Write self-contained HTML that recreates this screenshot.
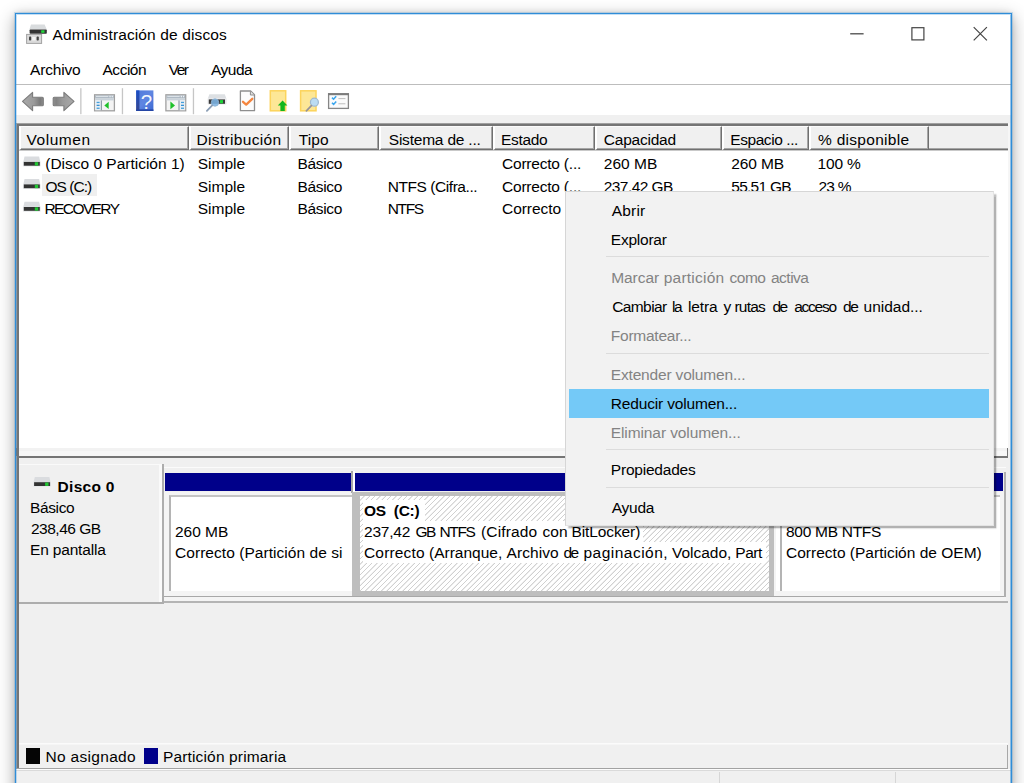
<!DOCTYPE html>
<html lang="es"><head><meta charset="utf-8"><title>Administración de discos</title>
<style>
html,body{margin:0;padding:0}
body{width:1024px;height:783px;overflow:hidden;background:#fff;position:relative;font-family:"Liberation Sans",sans-serif;color:#000}
.a{position:absolute}
.t{position:absolute;white-space:pre;line-height:20px;z-index:10}
.m{z-index:30}
#win{left:15px;top:13px;width:995px;height:800px;border:1px solid #2f8dd8;background:#f0f0f0;box-shadow:0 0 0 1px rgba(47,141,216,.22),0 5px 16px 1px rgba(0,0,0,.30),0 0 6px rgba(0,0,0,.12)}
.hc{position:absolute;top:126px;height:22px;background:#f0f0f0;border-top:1px solid #fbfbfb;border-left:2px solid #fff;border-right:1px solid #707070;border-bottom:1px solid #707070;box-sizing:content-box}
.hc:after{content:"";position:absolute;right:0;top:0;bottom:0;width:1px;background:#a6a6a6}
.hc:before{content:"";position:absolute;left:0;right:0;bottom:0;height:1px;background:#a6a6a6}
.sep{position:absolute;height:1px;background:#dcdcdc;left:606px;width:383px;z-index:25}
</style></head><body>
<div id="win" class="a"></div>
<!-- title + menu + toolbar white -->
<div class="a" style="left:16px;top:14px;width:995px;height:70px;background:#fff"></div>
<div class="a" style="left:16px;top:84px;width:995px;height:1px;background:#bdbdbd"></div>
<div class="a" style="left:16px;top:85px;width:995px;height:30px;background:#fff"></div>
<!-- caption buttons -->
<svg class="a" style="left:840px;top:20px" width="160" height="30" viewBox="0 0 160 30">
 <path d="M10.2 13.8H23.6" stroke="#4a4a4a" stroke-width="1.3" fill="none"/>
 <rect x="71.9" y="7.7" width="12" height="12.2" stroke="#444" stroke-width="1.2" fill="none"/>
 <path d="M133.7 7.2L146.9 20.4M146.9 7.2L133.7 20.4" stroke="#444" stroke-width="1.2" fill="none"/>
</svg>
<svg class="a" style="left:0;top:0;z-index:5" width="1024" height="783" viewBox="0 0 1024 783">
<defs>
 <linearGradient id="ga" x1="0" y1="0" x2="0" y2="1"><stop offset="0" stop-color="#b4b4b4"/><stop offset=".5" stop-color="#8e8e8e"/><stop offset="1" stop-color="#a8a8a8"/></linearGradient>
 <linearGradient id="gb" x1="0" y1="0" x2="1" y2="0"><stop offset="0" stop-color="#aaa"/><stop offset=".55" stop-color="#9a9a9a"/><stop offset=".85" stop-color="#7a7a7a"/><stop offset="1" stop-color="#8e8e8e"/></linearGradient>
 <linearGradient id="gf" x1="1" y1="0" x2="0" y2="0"><stop offset="0" stop-color="#aaa"/><stop offset=".55" stop-color="#9a9a9a"/><stop offset=".85" stop-color="#838383"/><stop offset="1" stop-color="#8e8e8e"/></linearGradient>
 <linearGradient id="gs" x1="0" y1="0" x2="0" y2="1"><stop offset="0" stop-color="#1a4fc6"/><stop offset="1" stop-color="#36468e"/></linearGradient>
 <linearGradient id="gh" x1="0" y1="0" x2="1" y2="1"><stop offset="0" stop-color="#5079da"/><stop offset=".5" stop-color="#5f86e2"/><stop offset="1" stop-color="#3c68d2"/></linearGradient>
 
</defs>
<!-- title icon -->
<g>
 <path d="M31 24.4H44.6L46.8 29.6H29.4Z" fill="#d9dcde"/>
 <rect x="29.6" y="29.4" width="17.2" height="4.4" rx=".8" fill="#333"/>
 <rect x="41.2" y="30.3" width="3.3" height="2.5" fill="#22d63c"/>
 <rect x="26.6" y="34.4" width="15" height="9" fill="#dadada" stroke="#a2a2a2" stroke-width="1"/>
 <rect x="29" y="36.6" width="2.2" height="4" rx=".8" fill="#444"/>
 <rect x="36.6" y="36.6" width="2.2" height="4" rx=".8" fill="#444"/>
 <rect x="32.2" y="37" width="3.4" height="3.4" fill="#f4f4f4"/>
</g>
<!-- back / forward arrows -->
<path d="M22.5 101.4L32.6 92.3V97.3H42.3Q43.3 97.3 43.3 98.3V104.7Q43.3 105.7 42.3 105.7H32.6V110.7Z" fill="url(#gb)" stroke="#7c7c7c" stroke-width="1.1" stroke-linejoin="round"/>
<path d="M74 101.4L63.9 92.3V97.3H54.2Q53.2 97.3 53.2 98.3V104.7Q53.2 105.7 54.2 105.7H63.9V110.7Z" fill="url(#gf)" stroke="#7c7c7c" stroke-width="1.1" stroke-linejoin="round"/>
<rect x="80.2" y="88.2" width="1.3" height="26" fill="#c6c6c6"/>
<rect x="121.8" y="88.2" width="1.3" height="26" fill="#c6c6c6"/>
<rect x="192.8" y="88.2" width="1.3" height="26" fill="#c6c6c6"/>
<!-- console tree icon -->
<g>
 <rect x="94.6" y="94.8" width="19.8" height="16" fill="#f4f4f4" stroke="#a0a0a0" stroke-width="1.3"/>
 <rect x="95.2" y="95.4" width="18.6" height="3" fill="#a9b5c0"/>
 <rect x="96" y="96.2" width="12.4" height=".9" fill="#e8edf1"/>
 <rect x="109.4" y="95.8" width="1.3" height="1.5" fill="#eef2f5"/><rect x="111.6" y="95.8" width="1.3" height="1.5" fill="#eef2f5"/>
 <rect x="95.2" y="98.4" width="18.6" height="2" fill="#c9d2da"/>
 <rect x="95.2" y="100.4" width="5.6" height="9.8" fill="#e9eff4"/>
 <rect x="100.8" y="100.4" width="1.2" height="9.8" fill="#8f9caa"/>
 <rect x="96.6" y="101.8" width="3" height="1.3" fill="#45a0dc"/>
 <rect x="96.6" y="104.7" width="3" height="1.3" fill="#3592d6"/>
 <rect x="96.6" y="107.6" width="3" height="1.3" fill="#45a0dc"/>
 <path d="M104.3 105.4L108.7 101.8V109Z" fill="#1fc12b"/>
</g>
<!-- help icon -->
<g>
 <rect x="136.2" y="90.4" width="17.2" height="20.6" fill="url(#gh)"/>
 <rect x="136.2" y="90.4" width="3.2" height="20.6" fill="url(#gs)"/>
 <rect x="136.2" y="109.4" width="17.2" height="1.6" fill="#2445a4"/>
 <text x="146.5" y="108.6" font-family="Liberation Sans, sans-serif" font-size="20.5" fill="#fff" fill-opacity=".95" text-anchor="middle">?</text>
</g>
<!-- action pane icon -->
<g>
 <rect x="165.9" y="94.8" width="19.8" height="16" fill="#f4f4f4" stroke="#a0a0a0" stroke-width="1.3"/>
 <rect x="166.5" y="95.4" width="18.6" height="3" fill="#a9b5c0"/>
 <rect x="167.3" y="96.2" width="12.4" height=".9" fill="#e8edf1"/>
 <rect x="180.7" y="95.8" width="1.3" height="1.5" fill="#eef2f5"/><rect x="182.9" y="95.8" width="1.3" height="1.5" fill="#eef2f5"/>
 <rect x="166.5" y="98.4" width="18.6" height="2" fill="#c9d2da"/>
 <rect x="179.6" y="100.4" width="5.5" height="9.8" fill="#e9eff4"/>
 <rect x="178.4" y="100.4" width="1.2" height="9.8" fill="#8f9caa"/>
 <rect x="181" y="101.8" width="3" height="1.3" fill="#45a0dc"/>
 <rect x="181" y="104.7" width="3" height="1.3" fill="#3592d6"/>
 <rect x="181" y="107.6" width="3" height="1.3" fill="#45a0dc"/>
 <path d="M175 105.4L170.4 101.6V109.2Z" fill="#1fc12b"/>
</g>
<!-- disk + magnifier -->
<g>
 <path d="M209.4 94.2H224.8L226.4 98.4H207.8Z" fill="#dde0e3"/>
 <rect x="207.6" y="98.2" width="19" height="6.2" rx=".8" fill="#e6e8ea"/>
 <rect x="208.8" y="99.4" width="16.2" height="4.4" fill="#3a3a3a"/>
 <rect x="220" y="100.1" width="3" height="3.2" fill="#1fd43a"/>
 <circle cx="215" cy="102.5" r="3.7" fill="#7db4e4" fill-opacity=".88" stroke="#8fb3d4" stroke-width=".9"/>
 <path d="M212.2 105.4L206.9 110.8" stroke="#8a9db4" stroke-width="1.8" stroke-linecap="round"/>
</g>
<!-- doc + check -->
<g>
 <path d="M240.4 91H250.6L254.5 94.8V110.7H240.4Z" fill="#fcfcfc" stroke="#8e8e8e" stroke-width="1.3" stroke-linejoin="round"/>
 <path d="M250.4 91.2V95H254.3" fill="#e2e2e2" stroke="#8e8e8e" stroke-width="1"/>
 <path d="M243 101.8L246.2 104.6L252.3 98.8" fill="none" stroke="#f4853e" stroke-width="2.3" stroke-linecap="round" stroke-linejoin="round"/>
</g>
<!-- yellow + green arrow -->
<g>
 <rect x="270.3" y="90.8" width="15.4" height="20" fill="#fde796" stroke="#fcd45c" stroke-width="1.5"/>
 <path d="M282.6 100.4L287.4 105.4H284.8V111H280.4V105.4H277.8Z" fill="#14b61c"/>
</g>
<!-- yellow + magnifier -->
<g>
 <rect x="300.6" y="90.8" width="15.4" height="20" fill="#fde796" stroke="#fcd45c" stroke-width="1.5"/>
 <circle cx="314.4" cy="102.2" r="4" fill="#bcdcf3" stroke="#9fb9d1" stroke-width="1.2"/>
 <path d="M311.4 105.6L306.4 110.8" stroke="#96939a" stroke-width="1.7" stroke-linecap="round"/>
</g>
<!-- checklist -->
<g>
 <rect x="328.6" y="93.8" width="19.8" height="14.6" fill="#fbfbfb" stroke="#868686" stroke-width="1.3"/>
 <rect x="328" y="93.2" width="21" height="2" fill="#7c7c7c"/>
 <path d="M332 97.6L333.6 99.2L336.2 96.2" fill="none" stroke="#3ba6ee" stroke-width="1.6"/>
 <path d="M332 102.8L333.6 104.4L336.2 101.4" fill="none" stroke="#3ba6ee" stroke-width="1.6"/>
 <rect x="338.4" y="98" width="7" height="1.1" fill="#c4c4c4"/>
 <rect x="338.4" y="103.2" width="7" height="1.1" fill="#c4c4c4"/>
</g>
<!-- list disk icons -->
<g transform="translate(22.9 156.6)"><path d="M1.6 0H16.2L17.4 5.4H.4Z" fill="#dadcdf"/>
  <rect x="0" y="5" width="17.8" height="5" rx=".8" fill="#e6e8ea"/>
  <rect x=".9" y="5.3" width="16" height="3.8" fill="#333"/>
  <rect x="11.9" y="5.6" width="3.4" height="3.4" fill="#22c634"/></g>
<g transform="translate(22.9 179.1)"><path d="M1.6 0H16.2L17.4 5.4H.4Z" fill="#dadcdf"/>
  <rect x="0" y="5" width="17.8" height="5" rx=".8" fill="#e6e8ea"/>
  <rect x=".9" y="5.3" width="16" height="3.8" fill="#333"/>
  <rect x="11.9" y="5.6" width="3.4" height="3.4" fill="#22c634"/></g>
<g transform="translate(22.9 201.7)"><path d="M1.6 0H16.2L17.4 5.4H.4Z" fill="#dadcdf"/>
  <rect x="0" y="5" width="17.8" height="5" rx=".8" fill="#e6e8ea"/>
  <rect x=".9" y="5.3" width="16" height="3.8" fill="#333"/>
  <rect x="11.9" y="5.6" width="3.4" height="3.4" fill="#22c634"/></g>
<g transform="translate(33.2 476.9)"><path d="M1.6 0H16.2L17.4 5.4H.4Z" fill="#dadcdf"/>
  <rect x="0" y="5" width="17.8" height="5" rx=".8" fill="#e6e8ea"/>
  <rect x=".9" y="5.3" width="16" height="3.8" fill="#333"/>
  <rect x="11.9" y="5.6" width="3.4" height="3.4" fill="#22c634"/></g>
</svg>

<!-- list view -->
<div class="a" style="left:16px;top:123px;width:993px;height:326px;background:#a0a0a0"></div>
<div class="a" style="left:17px;top:124px;width:992px;height:325px;background:#757575"></div>
<div class="a" style="left:19px;top:126px;width:989px;height:322px;background:#fff"></div>
<div class="a" style="left:1008px;top:123px;width:3px;height:326px;background:#f6f6f6"></div>
<!-- header -->
<div class="a" style="left:19px;top:126px;width:989px;height:24px;background:#f0f0f0;border-bottom:1px solid #707070;box-sizing:border-box"></div>
<div class="a" style="left:19px;top:148px;width:989px;height:1px;background:#a6a6a6"></div>
<div class="a" style="left:19px;top:150px;width:989px;height:1px;background:#c9c9c9"></div>
<div class="hc" style="left:19px;width:167px"></div>
<div class="hc" style="left:189px;width:97px"></div>
<div class="hc" style="left:289px;width:87px"></div>
<div class="hc" style="left:379px;width:111px"></div>
<div class="hc" style="left:493px;width:99px"></div>
<div class="hc" style="left:595px;width:124px"></div>
<div class="hc" style="left:722px;width:84px"></div>
<div class="hc" style="left:809px;width:117px"></div>
<!-- selection -->
<div class="a" style="left:42px;top:174px;width:55px;height:22px;background:#efefef"></div>
<!-- splitter -->
<div class="a" style="left:16px;top:448px;width:992px;height:10px;background:#757575"></div>
<div class="a" style="left:19px;top:448px;width:988px;height:3px;background:#f2f2f2"></div>
<div class="a" style="left:19px;top:451px;width:988px;height:5px;background:#f7f7f7"></div>
<!-- bottom pane -->
<div class="a" style="left:16px;top:458px;width:995px;height:285px;background:#f0f0f0"></div>
<!-- row highlight line -->
<div class="a" style="left:164px;top:467px;width:842px;height:1px;background:#fbfbfb"></div>
<!-- partitions row bg -->
<div class="a" style="left:164px;top:492px;width:842px;height:104px;background:#f4f4f4"></div>
<div class="a" style="left:164px;top:596px;width:842px;height:1px;background:#a8a8a8"></div>
<div class="a" style="left:164px;top:597px;width:842px;height:4px;background:#f4f4f4"></div>
<div class="a" style="left:16px;top:601px;width:992px;height:2px;background:#b4b4b4"></div>
<!-- disk label box -->
<div class="a" style="left:18px;top:464px;width:146px;height:140px;background:#adadad"></div>
<div class="a" style="left:18px;top:464px;width:144px;height:138px;background:#fafafa"></div>
<div class="a" style="left:19px;top:465px;width:140px;height:137px;background:#f0f0f0"></div>
<!-- bars -->
<div class="a" style="left:165px;top:473px;width:185.5px;height:18px;background:#00008a"></div>
<div class="a" style="left:354.6px;top:473px;width:419px;height:18px;background:#00008a"></div>
<div class="a" style="left:777px;top:473px;width:226px;height:18px;background:#00008a"></div>
<div class="a" style="left:1004px;top:472px;width:1.6px;height:125px;background:#b0b0b0"></div>
<!-- p1 -->
<div class="a" style="left:169px;top:495px;width:183px;height:96px;background:#fff;border-left:2px solid #b4b4b4;border-top:2px solid #c4c4c4;box-sizing:border-box"></div>
<div class="a" style="left:350.5px;top:471px;width:2px;height:22px;background:#a8a8a8"></div>
<div class="a" style="left:352.5px;top:471px;width:2px;height:22px;background:#fff"></div>
<!-- p2 -->
<div class="a" style="left:352px;top:491.5px;width:422px;height:104px;background:#bebebe"></div>
<div class="a" style="left:359.5px;top:496px;width:409.5px;height:94.6px;background:#fff repeating-linear-gradient(135deg,#fff 0,#fff 2.5px,#d0d0d0 2.9px,#d0d0d0 3.37px,#fff 3.77px)"></div>
<div class="a" style="left:363px;top:499.5px;width:62px;height:21px;background:#fff"></div>
<div class="a" style="left:363px;top:520.5px;width:280px;height:21px;background:#fff"></div>
<div class="a" style="left:363px;top:541.5px;width:403px;height:21px;background:#fff"></div>
<!-- p3 -->
<div class="a" style="left:776px;top:495px;width:224px;height:96px;background:#fff"></div>
<div class="a" style="left:780px;top:495px;width:2px;height:96px;background:#b4b4b4"></div>
<div class="a" style="left:780px;top:495px;width:220px;height:2px;background:#c4c4c4"></div>
<!-- legend -->
<div class="a" style="left:19px;top:743px;width:989px;height:1px;background:#fbfbfb"></div>
<div class="a" style="left:19px;top:744px;width:989px;height:1px;background:#f6f6f6"></div>
<div class="a" style="left:16px;top:768px;width:992px;height:1px;background:#a2a2a2"></div>
<div class="a" style="left:16px;top:769px;width:995px;height:1px;background:#fcfcfc"></div>
<div class="a" style="left:1007px;top:745px;width:1px;height:23px;background:#a8a8a8"></div>
<div class="a" style="left:26px;top:747.5px;width:14px;height:16.5px;background:#050505"></div>
<div class="a" style="left:144px;top:747.5px;width:14px;height:16.5px;background:#00008a"></div>
<!-- bottom pane sunken left border -->
<div class="a" style="left:16px;top:456px;width:1px;height:313px;background:#a0a0a0"></div>
<div class="a" style="left:17px;top:456px;width:2px;height:312px;background:#757575"></div>
<!-- status bar -->
<div class="a" style="left:16px;top:770px;width:995px;height:1px;background:#dadada"></div>
<div class="a" style="left:719px;top:772px;width:1px;height:11px;background:#d6d6d6"></div>
<div class="a" style="left:895px;top:772px;width:1px;height:11px;background:#d6d6d6"></div>

<!-- context menu -->
<div class="a" style="left:565px;top:191px;width:428.5px;height:335px;background:#f2f2f2;border:1px solid #d6d6d6;border-right-color:#e4e4e4;border-bottom-color:#e4e4e4;box-sizing:border-box;z-index:20;box-shadow:2.5px 2.5px 1.5px rgba(0,0,0,.30)"></div>
<div class="a" style="left:569px;top:388.5px;width:420px;height:29px;background:#74c9f7;z-index:22"></div>
<div class="sep" style="top:256px"></div>
<div class="sep" style="top:353px"></div>
<div class="sep" style="top:449px"></div>
<div class="sep" style="top:487px"></div>
<div class="a" style="left:16px;top:14px;width:993px;height:800px;border:1px solid rgba(47,141,216,.28);border-right-color:rgba(47,141,216,.5);z-index:40"></div>
<span class="t" style="left:52.50px;top:24.88px;font-size:15.5px;letter-spacing:0.122px;">Administración de discos</span>
<span class="t" style="left:30.00px;top:59.88px;font-size:15.5px;letter-spacing:-0.177px;">Archivo</span>
<span class="t" style="left:102.50px;top:59.88px;font-size:15.5px;letter-spacing:-0.480px;">Acción</span>
<span class="t" style="left:168.75px;top:59.88px;font-size:15.5px;letter-spacing:-1.552px;">Ver</span>
<span class="t" style="left:211.00px;top:59.88px;font-size:15.5px;letter-spacing:-0.512px;">Ayuda</span>
<span class="t" style="left:26.50px;top:129.88px;font-size:15.5px;letter-spacing:0.550px;">Volumen</span>
<span class="t" style="left:196.50px;top:129.88px;font-size:15.5px;letter-spacing:0.331px;">Distribución</span>
<span class="t" style="left:298.75px;top:129.88px;font-size:15.5px;letter-spacing:0.098px;">Tipo</span>
<span class="t" style="left:388.75px;top:129.88px;font-size:15.5px;letter-spacing:-0.208px;">Sistema de ...</span>
<span class="t" style="left:501.00px;top:129.88px;font-size:15.5px;letter-spacing:-0.327px;">Estado</span>
<span class="t" style="left:603.75px;top:129.88px;font-size:15.5px;letter-spacing:-0.217px;">Capacidad</span>
<span class="t" style="left:730.25px;top:129.88px;font-size:15.5px;letter-spacing:-0.431px;">Espacio ...</span>
<span class="t" style="left:818.00px;top:129.88px;font-size:15.5px;letter-spacing:0.294px;">% disponible</span>
<span class="t" style="left:45.25px;top:154.43px;font-size:15.5px;letter-spacing:-0.007px;">(Disco 0 Partición 1)</span>
<span class="t" style="left:45.50px;top:176.93px;font-size:15.5px;letter-spacing:-0.977px;">OS (C:)</span>
<span class="t" style="left:44.50px;top:199.43px;font-size:15.5px;letter-spacing:-1.600px;">RECOVERY</span>
<span class="t" style="left:197.75px;top:154.43px;font-size:15.5px;letter-spacing:-0.002px;">Simple</span>
<span class="t" style="left:297.50px;top:154.43px;font-size:15.5px;letter-spacing:-0.330px;">Básico</span>
<span class="t" style="left:197.75px;top:176.93px;font-size:15.5px;letter-spacing:-0.002px;">Simple</span>
<span class="t" style="left:297.50px;top:176.93px;font-size:15.5px;letter-spacing:-0.330px;">Básico</span>
<span class="t" style="left:197.75px;top:199.43px;font-size:15.5px;letter-spacing:-0.002px;">Simple</span>
<span class="t" style="left:297.50px;top:199.43px;font-size:15.5px;letter-spacing:-0.330px;">Básico</span>
<span class="t" style="left:387.75px;top:176.93px;font-size:15.5px;letter-spacing:-0.444px;">NTFS (Cifra...</span>
<span class="t" style="left:387.75px;top:199.43px;font-size:15.5px;letter-spacing:-1.377px;">NTFS</span>
<span class="t" style="left:502.00px;top:154.43px;font-size:15.5px;letter-spacing:-0.210px;">Correcto (...</span>
<span class="t" style="left:502.00px;top:176.93px;font-size:15.5px;letter-spacing:-0.210px;">Correcto (...</span>
<span class="t" style="left:502.00px;top:199.43px;font-size:15.5px;letter-spacing:-0.045px;">Correcto</span>
<span class="t" style="left:568.00px;top:199.43px;font-size:15.5px;">(...</span>
<span class="t" style="left:603.75px;top:154.43px;font-size:15.5px;letter-spacing:0.034px;">260 MB</span>
<span class="t" style="left:603.75px;top:176.93px;font-size:15.5px;letter-spacing:-0.565px;">237,42 GB</span>
<span class="t" style="left:731.25px;top:154.43px;font-size:15.5px;letter-spacing:-0.116px;">260 MB</span>
<span class="t" style="left:731.25px;top:176.93px;font-size:15.5px;letter-spacing:-0.736px;">55,51 GB</span>
<span class="t" style="left:817.50px;top:154.43px;font-size:15.5px;letter-spacing:-0.167px;">100 %</span>
<span class="t" style="left:818.50px;top:176.93px;font-size:15.5px;letter-spacing:-0.766px;">23 %</span>
<span class="t" style="left:603.75px;top:199.43px;font-size:15.5px;letter-spacing:0.034px;">800 MB</span>
<span class="t" style="left:731.25px;top:199.43px;font-size:15.5px;letter-spacing:-0.116px;">472 MB</span>
<span class="t" style="left:818.50px;top:199.43px;font-size:15.5px;letter-spacing:-0.766px;">59 %</span>
<span class="t" style="left:57.60px;top:477.03px;font-size:15.5px;font-weight:700;letter-spacing:0.281px;">Disco 0</span>
<span class="t" style="left:30.00px;top:498.13px;font-size:15.5px;letter-spacing:-0.380px;">Básico</span>
<span class="t" style="left:31.00px;top:519.33px;font-size:15.5px;letter-spacing:-0.509px;">238,46 GB</span>
<span class="t" style="left:30.00px;top:540.43px;font-size:15.5px;letter-spacing:-0.174px;">En pantalla</span>
<span class="t" style="left:175.00px;top:522.13px;font-size:15.5px;letter-spacing:-0.016px;">260 MB</span>
<span class="t" style="left:175.00px;top:543.38px;font-size:15.5px;letter-spacing:0.050px;">Correcto (Partición de si</span>
<span class="t" style="left:364.00px;top:501.13px;font-size:15.5px;font-weight:700;letter-spacing:-0.303px;">OS  (C:)</span>
<span class="t" style="left:364.00px;top:522.13px;font-size:15.5px;letter-spacing:-0.208px;">237,42</span>
<span class="t" style="left:415.50px;top:522.13px;font-size:15.5px;letter-spacing:-1.600px;">GB</span>
<span class="t" style="left:439.50px;top:522.13px;font-size:15.5px;letter-spacing:-1.377px;">NTFS</span>
<span class="t" style="left:481.00px;top:522.13px;font-size:15.5px;letter-spacing:0.142px;">(Cifrado</span>
<span class="t" style="left:542.40px;top:522.13px;font-size:15.5px;letter-spacing:0.165px;">con</span>
<span class="t" style="left:571.40px;top:522.13px;font-size:15.5px;letter-spacing:-0.090px;">BitLocker)</span>
<span class="t" style="left:364.00px;top:543.38px;font-size:15.5px;letter-spacing:0.169px;">Correcto</span>
<span class="t" style="left:429.00px;top:543.38px;font-size:15.5px;letter-spacing:0.008px;">(Arranque,</span>
<span class="t" style="left:506.50px;top:543.38px;font-size:15.5px;letter-spacing:0.073px;">Archivo</span>
<span class="t" style="left:563.60px;top:543.38px;font-size:15.5px;letter-spacing:-1.600px;">de</span>
<span class="t" style="left:583.50px;top:543.38px;font-size:15.5px;letter-spacing:0.477px;">paginación,</span>
<span class="t" style="left:672.00px;top:543.38px;font-size:15.5px;letter-spacing:-0.023px;">Volcado,</span>
<span class="t" style="left:735.25px;top:543.38px;font-size:15.5px;letter-spacing:-0.457px;">Part</span>
<span class="t" style="left:786.00px;top:522.13px;font-size:15.5px;letter-spacing:-0.285px;">800 MB NTFS</span>
<span class="t" style="left:786.00px;top:543.38px;font-size:15.5px;letter-spacing:0.009px;">Correcto (Partición de OEM)</span>
<span class="t" style="left:45.50px;top:746.63px;font-size:15.5px;letter-spacing:0.308px;">No asignado</span>
<span class="t" style="left:163.00px;top:746.63px;font-size:15.5px;letter-spacing:0.149px;">Partición primaria</span>
<span class="t m" style="left:611.80px;top:201.13px;font-size:15.5px;letter-spacing:0.159px;">Abrir</span>
<span class="t m" style="left:610.80px;top:230.03px;font-size:15.5px;letter-spacing:-0.236px;">Explorar</span>
<span class="t m" style="left:611.20px;top:268.38px;font-size:15.5px;color:#838383;letter-spacing:-0.053px;">Marcar</span>
<span class="t m" style="left:663.75px;top:268.38px;font-size:15.5px;color:#838383;letter-spacing:0.223px;">partición</span>
<span class="t m" style="left:729.50px;top:268.38px;font-size:15.5px;color:#838383;letter-spacing:-0.494px;">como</span>
<span class="t m" style="left:771.00px;top:268.38px;font-size:15.5px;color:#838383;letter-spacing:-0.514px;">activa</span>
<span class="t m" style="left:612.20px;top:297.13px;font-size:15.5px;letter-spacing:-0.602px;">Cambiar</span>
<span class="t m" style="left:672.00px;top:297.13px;font-size:15.5px;letter-spacing:-1.444px;">la</span>
<span class="t m" style="left:688.00px;top:297.13px;font-size:15.5px;letter-spacing:-0.158px;">letra</span>
<span class="t m" style="left:723.50px;top:297.13px;font-size:15.5px;">y</span>
<span class="t m" style="left:734.50px;top:297.13px;font-size:15.5px;letter-spacing:-0.802px;">rutas</span>
<span class="t m" style="left:772.60px;top:297.13px;font-size:15.5px;letter-spacing:-1.600px;">de</span>
<span class="t m" style="left:794.20px;top:297.13px;font-size:15.5px;letter-spacing:-1.258px;">acceso</span>
<span class="t m" style="left:843.00px;top:297.13px;font-size:15.5px;letter-spacing:-1.320px;">de</span>
<span class="t m" style="left:863.60px;top:297.13px;font-size:15.5px;letter-spacing:-0.020px;">unidad...</span>
<span class="t m" style="left:610.80px;top:326.13px;font-size:15.5px;color:#838383;letter-spacing:-0.250px;">Formatear...</span>
<span class="t m" style="left:610.80px;top:365.03px;font-size:15.5px;color:#838383;letter-spacing:-0.175px;">Extender volumen...</span>
<span class="t m" style="left:610.80px;top:393.83px;font-size:15.5px;letter-spacing:-0.160px;">Reducir volumen...</span>
<span class="t m" style="left:610.80px;top:422.83px;font-size:15.5px;color:#838383;letter-spacing:-0.105px;">Eliminar volumen...</span>
<span class="t m" style="left:610.80px;top:460.43px;font-size:15.5px;letter-spacing:-0.209px;">Propiedades</span>
<span class="t m" style="left:611.80px;top:498.23px;font-size:15.5px;letter-spacing:-0.262px;">Ayuda</span>
</body></html>
